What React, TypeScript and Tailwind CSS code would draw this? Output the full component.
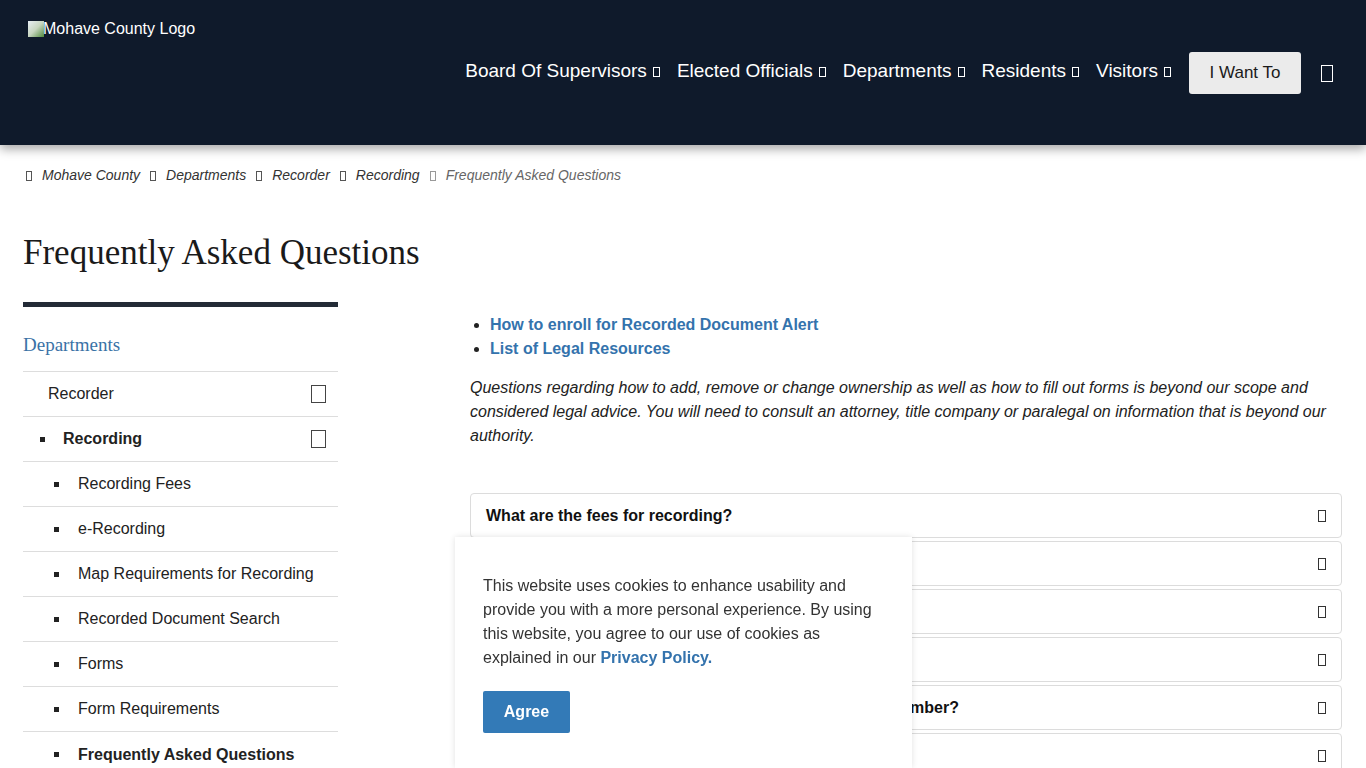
import React from "react";

function Tofu({ className = "" }: { className?: string }) {
  return <span className={"inline-block border border-current " + className} />;
}

const nav = ["Board Of Supervisors", "Elected Officials", "Departments", "Residents", "Visitors"];
const crumbs = ["Mohave County", "Departments", "Recorder", "Recording"];
const subItems = [
  "Recording Fees",
  "e-Recording",
  "Map Requirements for Recording",
  "Recorded Document Search",
  "Forms",
  "Form Requirements",
];
const questions = [
  "What are the fees for recording?",
  "How do I record a document?",
  "Can I record a document electronically?",
  "How long does it take to record?",
  "How can I find a recorded document if I know the fee number?",
  "Do you provide copies of recorded documents?",
];

export default function App() {
  return (
    <div className="min-h-screen bg-white font-['Liberation_Sans',Arial,sans-serif] text-[#222]">
      <header className="relative z-10 h-[145px] bg-[#0f1a2b] shadow-[0_4px_10px_rgba(0,0,0,0.35)]">
        <div className="flex items-start justify-between pl-[28px] pr-[33px]">
          <div className="mt-[17px] flex items-center text-[16px] text-white">
            <span className="inline-block h-[16px] w-[16px] bg-gradient-to-br from-[#e8eef5] via-[#c7d6c0] to-[#4f8a3a]" />
            <span className="-ml-[1px]">Mohave County Logo</span>
          </div>
          <nav className="mt-[52px] flex items-center">
            {nav.map((n) => (
              <div key={n} className="mr-[17px] flex items-center pb-[3px] text-[19px] text-white">
                <span>{n}</span>
                <Tofu className="ml-[6px] h-[10px] w-[7px]" />
              </div>
            ))}
            <button className="ml-[1px] h-[42px] w-[112px] rounded-[3px] bg-[#ebebeb] text-[17px] text-[#1a1a1a]">
              I Want To
            </button>
            <Tofu className="ml-[20px] h-[17px] w-[12px] text-white" />
          </nav>
        </div>
      </header>

      <div className="px-[23px]">
        <div className="mt-[20px] flex items-center pl-[3px] text-[14px] italic">
          {crumbs.map((c) => (
            <React.Fragment key={c}>
              <Tofu className="mr-[10px] h-[10px] w-[6px] text-[#555]" />
              <span className="mr-[10px] text-[#333]">{c}</span>
            </React.Fragment>
          ))}
          <Tofu className="mr-[10px] h-[10px] w-[6px] text-[#999]" />
          <span className="text-[#666]">Frequently Asked Questions</span>
        </div>

        <h1 className="mt-[47px] font-['Liberation_Serif','Times_New_Roman',serif] text-[35px] leading-[40px] text-[#1a1a1a]">
          Frequently Asked Questions
        </h1>

        <div className="mt-[29px] flex">
          <aside className="w-[315px] shrink-0">
            <div className="h-[5px] bg-[#232b36]" />
            <div className="pb-[15px] pt-[27px] font-['Liberation_Serif','Times_New_Roman',serif] text-[19px] leading-[22px] text-[#3a72a6]">
              Departments
            </div>
            <div className="border-t border-[#ddd]">
              <div className="flex h-[45px] items-center justify-between border-b border-[#ddd] pl-[25px] pr-[12px] text-[16px]">
                <span>Recorder</span>
                <Tofu className="h-[18px] w-[15px] text-[#444]" />
              </div>
              <div className="flex h-[45px] items-center justify-between border-b border-[#ddd] pl-[17px] pr-[12px] text-[16px]">
                <span className="flex items-center font-bold">
                  <span className="mr-[18px] inline-block h-[5px] w-[5px] bg-[#222]" />
                  Recording
                </span>
                <Tofu className="h-[18px] w-[15px] text-[#444]" />
              </div>
              {subItems.map((s) => (
                <div key={s} className="flex h-[45px] items-center border-b border-[#ddd] pl-[31px] text-[16px]">
                  <span className="mr-[19px] inline-block h-[5px] w-[5px] bg-[#222]" />
                  {s}
                </div>
              ))}
              <div className="flex h-[45px] items-center pl-[31px] text-[16px] font-bold">
                <span className="mr-[19px] inline-block h-[5px] w-[5px] bg-[#222]" />
                Frequently Asked Questions
              </div>
            </div>
          </aside>

          <main className="ml-[132px] flex-1 pr-[1px] pt-[11px]">
            <ul className="ml-[20px] list-disc text-[16px] font-bold leading-[24px] text-[#3473ad] marker:text-[#222]">
              <li>How to enroll for Recorded Document Alert</li>
              <li>List of Legal Resources</li>
            </ul>
            <p className="mt-[15px] text-[16px] italic leading-[24px] text-[#222]">
              Questions regarding how to add, remove or change ownership as well as how to fill out forms is beyond our
              scope and considered legal advice. You will need to consult an attorney, title company or paralegal on
              information that is beyond our authority.
            </p>
            <div className="mt-[45px] flex flex-col gap-[3px]">
              {questions.map((q) => (
                <div
                  key={q}
                  className="flex h-[45px] items-center justify-between rounded-[4px] border border-[#dcdcdc] pl-[15px] pr-[15px] text-[16px] font-bold text-[#111]"
                >
                  <span>{q}</span>
                  <Tofu className="h-[12px] w-[8px] text-[#333]" />
                </div>
              ))}
            </div>
          </main>
        </div>
      </div>

      <div className="fixed bottom-0 left-[455px] top-[537px] z-20 w-[457px] bg-white px-[28px] pt-[37px] shadow-[0_0_6px_rgba(0,0,0,0.12)]">
        <p className="text-[16px] leading-[24px] text-[#333]">
          This website uses cookies to enhance usability and provide you with a more personal experience. By using this
          website, you agree to our use of cookies as explained in our{" "}
          <span className="font-bold text-[#3473ad]">Privacy Policy.</span>
        </p>
        <button className="mt-[21px] h-[42px] w-[87px] rounded-[2px] bg-[#337ab7] text-[16px] font-bold text-white">
          Agree
        </button>
      </div>
    </div>
  );
}
